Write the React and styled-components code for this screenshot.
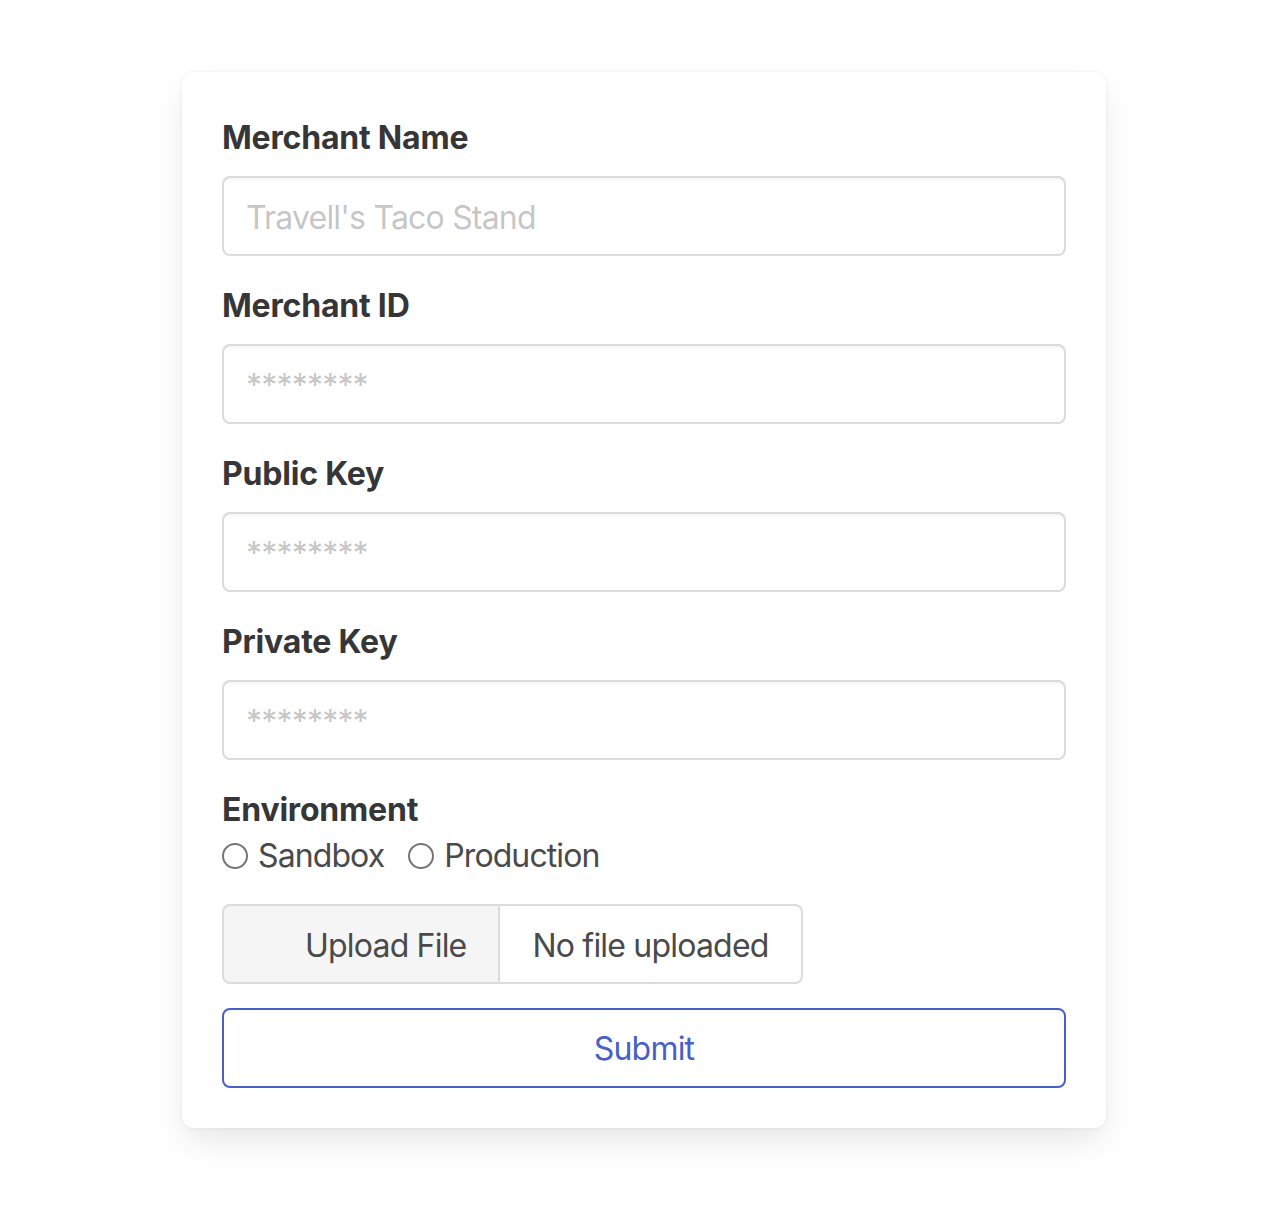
import React from "react";
import styled, { createGlobalStyle } from "styled-components";

const GlobalStyle = createGlobalStyle`
  * { box-sizing: border-box; }
  body {
    margin: 0;
    background: #ffffff;
    font-family: Inter, "Noto Sans", "Liberation Sans", sans-serif;
    color: #4a4a4a;
  }
`;

const Page = styled.div`
  padding: 72px 0 90px 182px;
`;

const Card = styled.form`
  width: 924px;
  background: #fff;
  border-radius: 12px;
  padding: 40px 40px 40px;
  box-shadow: 0 16px 32px -4px rgba(10, 10, 10, 0.1),
    0 0 0 2px rgba(10, 10, 10, 0.02);
`;

const Field = styled.div`
  margin-bottom: 24px;
  &:last-child {
    margin-bottom: 0;
  }
`;

const Label = styled.label`
  display: block;
  font-size: 32px;
  line-height: 52px;
  font-weight: 700;
  letter-spacing: -0.2px;
  color: #363636;
  margin-bottom: ${(p) => (p.$tight ? "-4px" : "12px")};
`;

const Input = styled.input`
  display: block;
  width: 100%;
  height: 80px;
  padding: 2px 22px 0;
  font-family: inherit;
  font-size: 32px;
  letter-spacing: -0.8px;
  color: #363636;
  border: 2px solid #dbdbdb;
  border-radius: 8px;
  background: #fff;
  box-shadow: inset 0 1px 2px rgba(10, 10, 10, 0.05);
  outline: none;
  &::placeholder {
    color: rgba(54, 54, 54, 0.3);
  }
`;

const RadioRow = styled.div`
  display: flex;
  align-items: center;
  height: 48px;
  gap: 24px;
`;

const RadioLabel = styled.label`
  display: inline-flex;
  align-items: center;
  font-size: 32px;
  line-height: 48px;
  letter-spacing: -0.9px;
  color: #4a4a4a;
`;

const Radio = styled.input`
  appearance: none;
  width: 26px;
  height: 26px;
  margin: 0 10px 0 0;
  border: 2px solid #767676;
  border-radius: 50%;
  background: #fff;
  &:checked {
    background: radial-gradient(#485fc7 45%, #fff 50%);
  }
`;

const FileBox = styled.div`
  display: inline-flex;
  height: 80px;
  font-size: 32px;
  letter-spacing: -0.8px;
`;

const FileCta = styled.span`
  display: flex;
  align-items: center;
  padding: 2px 32px 0 81px;
  background: #f5f5f5;
  color: #4a4a4a;
  border: 2px solid #dbdbdb;
  border-radius: 8px 0 0 8px;
`;

const FileName = styled.span`
  display: flex;
  align-items: center;
  padding: 2px 32px 0;
  color: #4a4a4a;
  border: 2px solid #dbdbdb;
  border-left: none;
  border-radius: 0 8px 8px 0;
`;

const Submit = styled.button`
  display: block;
  width: 100%;
  height: 80px;
  padding-top: 2px;
  font-family: inherit;
  font-size: 32px;
  letter-spacing: -0.8px;
  color: #485fc7;
  background: transparent;
  border: 2px solid #485fc7;
  border-radius: 8px;
  cursor: pointer;
`;

const fields = [
  { label: "Merchant Name", placeholder: "Travell's Taco Stand" },
  { label: "Merchant ID", placeholder: "********" },
  { label: "Public Key", placeholder: "********" },
  { label: "Private Key", placeholder: "********" },
];

export default function App() {
  return (
    <>
      <GlobalStyle />
      <Page>
        <Card onSubmit={(e) => e.preventDefault()}>
          {fields.map((f) => (
            <Field key={f.label}>
              <Label>{f.label}</Label>
              <Input type="text" placeholder={f.placeholder} />
            </Field>
          ))}
          <Field>
            <Label $tight>Environment</Label>
            <RadioRow>
              <RadioLabel>
                <Radio type="radio" name="env" value="sandbox" />
                Sandbox
              </RadioLabel>
              <RadioLabel>
                <Radio type="radio" name="env" value="production" />
                Production
              </RadioLabel>
            </RadioRow>
          </Field>
          <Field>
            <FileBox>
              <FileCta>Upload File</FileCta>
              <FileName>No file uploaded</FileName>
            </FileBox>
          </Field>
          <Field>
            <Submit type="submit">Submit</Submit>
          </Field>
        </Card>
      </Page>
    </>
  );
}
